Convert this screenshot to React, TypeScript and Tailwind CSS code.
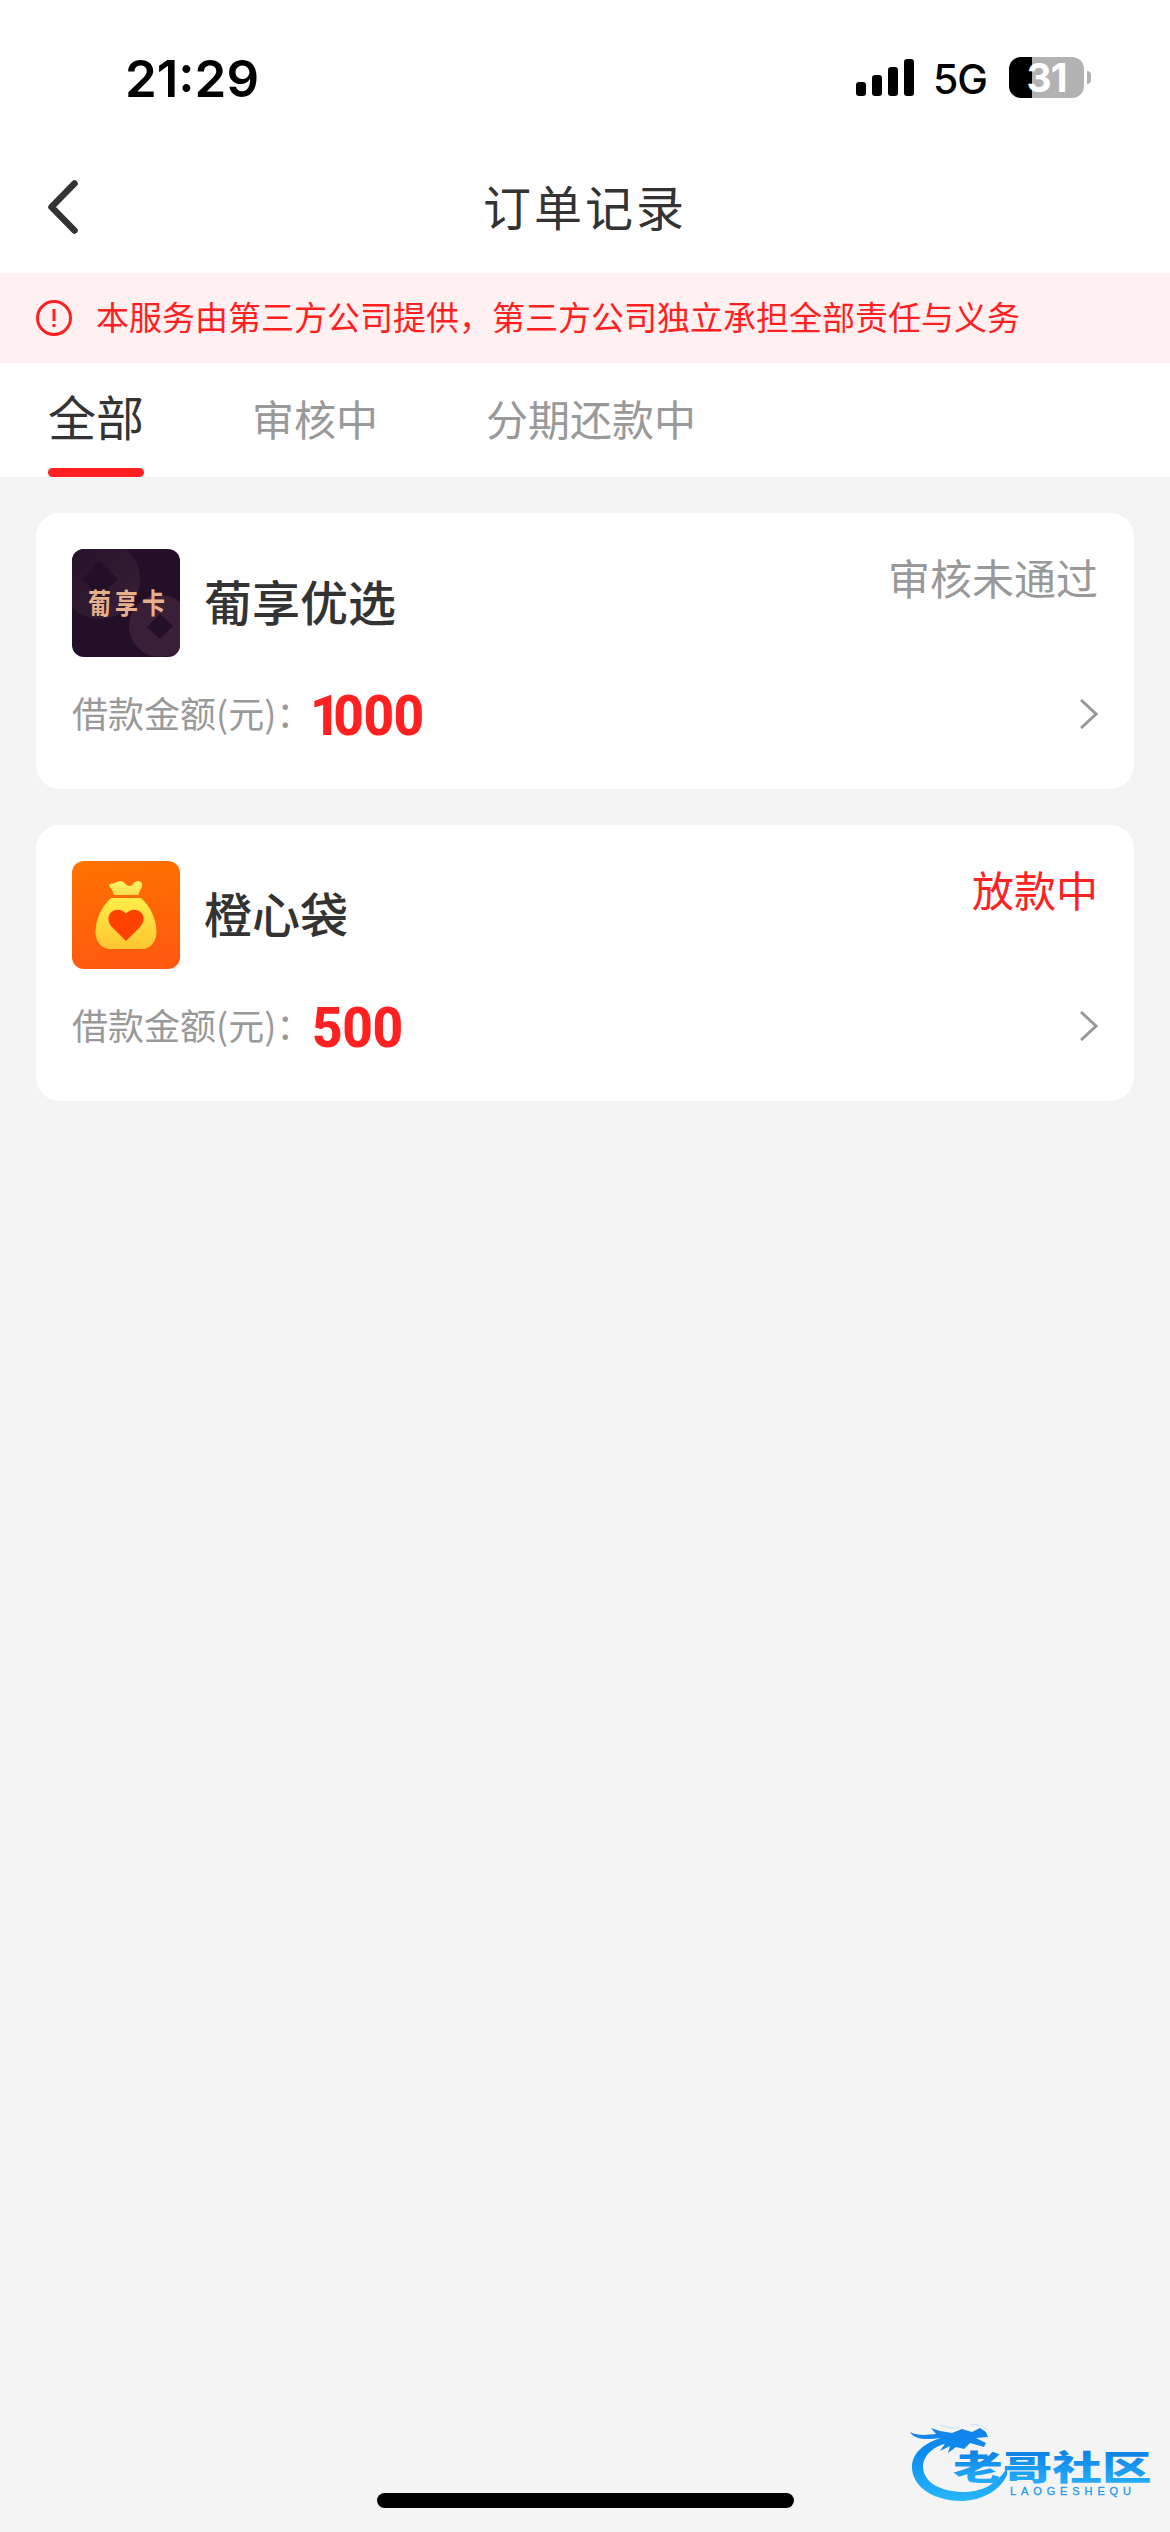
import type { ReactNode } from "react";

interface IOrder {
  name: string;
  amount: string;
  status: string;
  statusClass: string;
  logo: ReactNode;
}

const GrapeLogo = () => (
  <div className="relative size-[108px] overflow-hidden rounded-xl bg-[#240f29]">
    <svg viewBox="0 0 108 108" className="size-full">
      <defs>
        <linearGradient id="coinA" x1="0" y1="0" x2="1" y2="1">
          <stop offset="0" stopColor="#220f27" />
          <stop offset="1" stopColor="#3a2136" />
        </linearGradient>
      </defs>
      <path
        fillRule="evenodd"
        fill="url(#coinA)"
        d="M-12 30a40 40 0 1 0 80 0a40 40 0 1 0-80 0zM27 12Q28 12 30 14L44 28Q45 30 44 32L30 46Q28 48 26 46L12 32Q10 30 12 28L25 14Q26 12 27 12z"
      />
      <path
        fillRule="evenodd"
        fill="#392036"
        d="M57 77a31 31 0 1 0 62 0a31 31 0 1 0-62 0zM88 65L101 77L88 90L75 78z"
      />
    </svg>
    <span className="absolute top-[36px] left-4 scale-y-125 whitespace-nowrap text-[23px] leading-[32px] font-bold tracking-[4px] text-[#e6b08a]">
      葡享卡
    </span>
  </div>
);

const BagLogo = () => (
  <svg viewBox="0 0 108 108" className="size-[108px] rounded-xl">
    <defs>
      <linearGradient id="bagBg" x1="0" y1="0" x2="0.15" y2="1">
        <stop offset="0" stopColor="#ff7300" />
        <stop offset="1" stopColor="#ff5a0f" />
      </linearGradient>
      <linearGradient id="bagTop" x1="0" y1="0" x2="0" y2="1">
        <stop offset="0" stopColor="#fff36a" />
        <stop offset="1" stopColor="#ffdc4a" />
      </linearGradient>
      <linearGradient id="bagBody" x1="0" y1="0" x2="0" y2="1">
        <stop offset="0" stopColor="#ffee4a" />
        <stop offset="1" stopColor="#ffc530" />
      </linearGradient>
    </defs>
    <rect width="108" height="108" fill="url(#bagBg)" />
    <path
      fill="url(#bagTop)"
      d="M42 34Q41 29 37.5 25.5C36.5 23.5 38.5 22.5 40.5 22.5C43 22.5 45 20 48.5 20C52 20 54 25 57.5 25C61 25 62 20 66 20C70 20 71 24 69.5 27Q67 30 66.5 34z"
    />
    <path
      fill="url(#bagBody)"
      d="M39 37H69C78 45 84.5 58 84.5 71C84.5 81 78 88 70 88H38C30 88 23.5 81 23.5 71C23.5 58 30 45 39 37z"
    />
    <path
      fill="#ff4200"
      d="M54 80L40 66C35 61 35.5 54 39.5 51C44 47.5 50 48 54 52.5C58 48 64 47.5 68.5 51C72.5 54 73 61 68 66z"
    />
  </svg>
);

const orders: IOrder[] = [
  {
    name: "葡享优选",
    amount: "1000",
    status: "审核未通过",
    statusClass: "text-[#999999]",
    logo: <GrapeLogo />,
  },
  {
    name: "橙心袋",
    amount: "500",
    status: "放款中",
    statusClass: "text-[#ff2121]",
    logo: <BagLogo />,
  },
];

const StatusBar = () => (
  <div className="flex h-[141px] items-start justify-between pt-[57px] pr-[79px] pl-[125px] font-['Inter',sans-serif] text-black">
    <span className="text-[51px] leading-[43px] font-semibold">21:29</span>
    <div className="flex h-[41px] items-center">
      <svg viewBox="0 0 58 37" className="h-[37px] w-[58px]">
        <rect x="0" y="23" width="10" height="14" rx="3" />
        <rect x="16" y="16" width="10" height="21" rx="3" />
        <rect x="32" y="8" width="10" height="29" rx="3" />
        <rect x="48" y="0" width="10" height="37" rx="3" />
      </svg>
      <span className="mt-1 ml-[19px] w-[56px] text-[41px] leading-[41px] font-medium tracking-[-1px]">
        5G
      </span>
      <div className="ml-5 flex h-[41px] w-[75px] items-center justify-center rounded-[12px] bg-[linear-gradient(90deg,#000_23px,#b2b2b2_23px)]">
        <span className="text-[39px] leading-[41px] font-bold tracking-[-1px] text-white">
          31
        </span>
      </div>
      <div className="ml-[3px] h-[13px] w-1 rounded-r-full bg-[#b2b2b2]"></div>
    </div>
  </div>
);

const Header = () => (
  <div className="flex h-[132px] items-center px-12">
    <svg
      viewBox="0 0 30 54"
      className="h-[54px] w-[30px]"
      fill="none"
      stroke="#333333"
      strokeWidth="6.5"
      strokeLinecap="round"
      strokeLinejoin="round"
    >
      <path d="M26.5 3.5L3.5 27L26.5 50.5" />
    </svg>
    <h1 className="mr-[30px] mb-1 flex-1 text-center text-[48px] leading-[60px] tracking-[3px] text-[#333333]">
      订单记录
    </h1>
  </div>
);

const Notice = () => (
  <div className="flex h-[90px] items-center gap-6 bg-[#fff1f1] px-9 text-[#ff2121]">
    <svg viewBox="0 0 36 36" className="size-9" fill="none" stroke="currentColor">
      <circle cx="18" cy="18" r="16.5" strokeWidth="3" />
      <path d="M18 9V21" strokeWidth="3" />
      <circle cx="18" cy="25.5" r="1.8" fill="currentColor" stroke="none" />
    </svg>
    <p className="mb-1 text-[33px] leading-[48px] whitespace-nowrap">
      本服务由第三方公司提供，第三方公司独立承担全部责任与义务
    </p>
  </div>
);

const Tabs = () => (
  <div className="flex h-[114px] gap-[108px] bg-white px-12 text-[42px] leading-[110px] text-[#999999]">
    <div className="flex flex-col justify-between text-[48px] leading-[105px] text-[#333333]">
      <span>全部</span>
      <div className="h-[9px] w-24 rounded-full bg-[#ff2121]"></div>
    </div>
    <span>审核中</span>
    <span>分期还款中</span>
  </div>
);

const OrderCard = ({ name, amount, status, statusClass, logo }: IOrder) => (
  <div className="h-[276px] rounded-3xl bg-white p-9">
    <div className="flex h-[108px]">
      {logo}
      <p className="ml-6 text-[48px] leading-[102px] font-medium text-[#333333]">
        {name}
      </p>
      <p className={`ml-auto text-[42px] leading-[56px] ${statusClass}`}>
        {status}
      </p>
    </div>
    <div className="mt-[27px] flex h-[60px] items-center">
      <span className="mb-1 w-[240px] text-[36px] leading-[54px] whitespace-nowrap text-[#999999]">
        借款金额(元)：
      </span>
      <span
        className={`mt-1 origin-left scale-x-[0.95] font-['Roboto',sans-serif] text-[56px] leading-[60px] font-extrabold tracking-[-0.5px] text-[#ff2121] ${
          amount.startsWith("1")
            ? "first-letter:-ml-0.5 first-letter:tracking-[-8px]"
            : ""
        }`}
      >
        {amount}
      </span>
      <svg
        viewBox="0 0 18 30"
        className="ml-auto h-[30px] w-[18px]"
        fill="none"
        stroke="#999999"
        strokeWidth="3"
      >
        <path d="M1 1L16 15L1 29" />
      </svg>
    </div>
  </div>
);

const Watermark = () => (
  <svg
    viewBox="0 0 250 86"
    className="absolute right-[14px] bottom-[23px] h-[86px] w-[250px]"
  >
    <defs>
      <linearGradient id="wm" gradientUnits="userSpaceOnUse" x1="0" y1="4" x2="0" y2="80">
        <stop offset="0" stopColor="#1483ea" />
        <stop offset="0.35" stopColor="#0c8cf0" />
        <stop offset="1" stopColor="#2ab8fa" />
      </linearGradient>
      <linearGradient id="wmText" x1="0" y1="0.15" x2="0" y2="0.9">
        <stop offset="0" stopColor="#0a7ee4" />
        <stop offset="1" stopColor="#27b0fa" />
      </linearGradient>
    </defs>
    {/* dragon ring */}
    <path
      fill="url(#wm)"
      d="M38 14C16 20 5 32 6 46C8 66 30 78 56 78C78 77 94 67 101 52L101 45C90 62 76 69 56 69C34 68 18 60 17 44C17 32 28 22 46 19z"
    />
    <path
      fill="url(#wm)"
      d="M4 9C12 13 20 12 30 11L25 5L34 8L46 10L56 6L66 9L74 5L80 9L82 14L70 15L80 20L78 24L64 20L58 26L50 24L42 30L44 23L34 28L40 19L28 22L34 15C22 17 8 17 4 9z"
    />
    <path d="M34 2Q44 6 54 5M64 2Q76 0 82 8" fill="none" stroke="#b9dcf5" strokeWidth="0.8" />
    <text
      transform="translate(47 57) scale(1.46 1)"
      fontFamily="'Noto Sans CJK SC', sans-serif"
      fontSize="34"
      fontWeight="900"
      fill="url(#wmText)"
      textLength="136"
    >
      老哥社区
    </text>
    <text
      x="104"
      y="71.5"
      fontFamily="'Liberation Sans', sans-serif"
      fontSize="11"
      fill="#2298ee"
      stroke="#2298ee"
      strokeWidth="0.3"
      textLength="121"
    >
      LAOGESHEQU
    </text>
  </svg>
);

export default function App() {
  return (
    <div className="relative flex h-[2532px] w-[1170px] flex-col overflow-hidden bg-[#f4f4f4] font-['Noto_Sans_CJK_SC',sans-serif]">
      <div className="bg-white">
        <StatusBar />
        <Header />
      </div>
      <Notice />
      <Tabs />
      <div className="flex flex-col gap-9 p-9">
        {orders.map((row, idx) => (
          <OrderCard key={idx} {...row} />
        ))}
      </div>
      <div className="mx-auto mt-auto mb-6 h-[15px] w-[417px] rounded-full bg-black"></div>
      <Watermark />
    </div>
  );
}
